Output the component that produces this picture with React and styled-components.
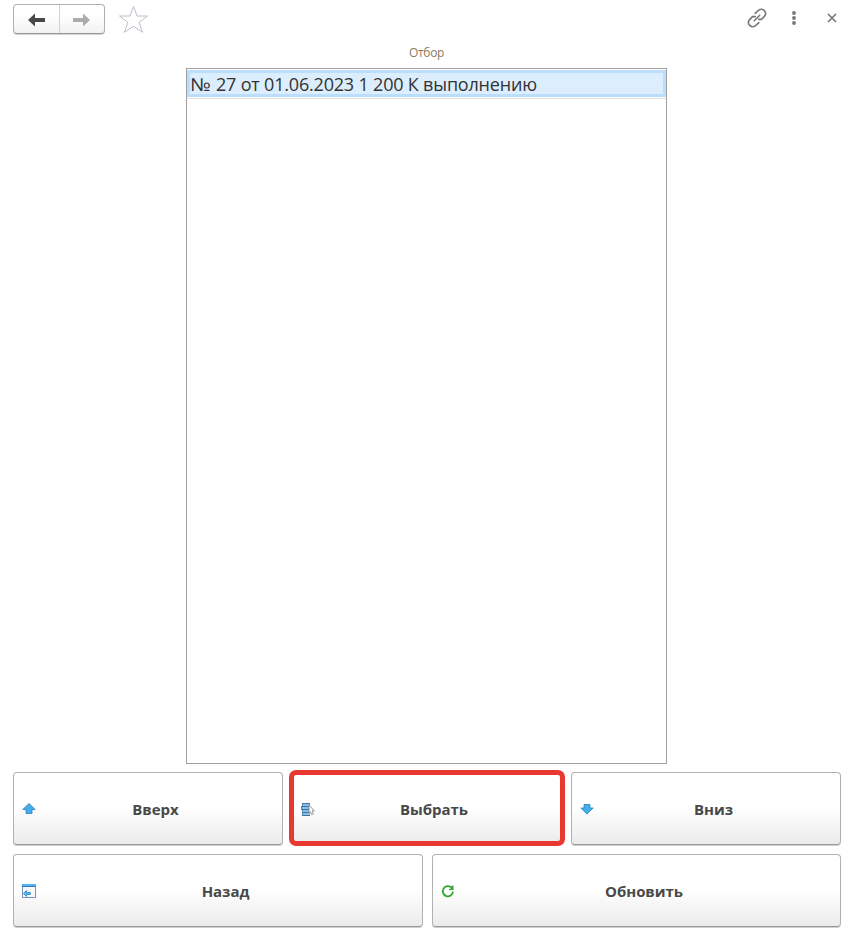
import React from "react";
import styled, { createGlobalStyle } from "styled-components";

const GlobalStyle = createGlobalStyle`
  *, *::before, *::after { box-sizing: border-box; }
  body { margin: 0; background: #fff; font-family: "Open Sans", "Noto Sans", sans-serif; }
  button { font: inherit; padding: 0; margin: 0; border: 0; background: none; }
  svg { display: block; flex: none; }
`;

const Window = styled.main`
  width: 857px;
  height: 937px;
  display: flex;
  flex-direction: column;
  overflow: hidden;
`;

const TopBar = styled.header`
  display: flex;
  align-items: flex-start;
  height: 42px;
  padding: 4px 6px 0 13px;
`;

const History = styled.div`
  display: flex;
  width: 92px;
  height: 30px;
  border: 1px solid #b0b0b0;
  border-bottom-color: #999;
  border-radius: 4px;
  background: linear-gradient(#fff 35%, #f2f2f2);
  box-shadow: 0 1px 0 #d4d4d4;
`;

const HistoryButton = styled.button`
  flex: 1;
  display: flex;
  align-items: center;
  justify-content: center;
  color: ${(p) => (p.$dim ? "#acacac" : "#484848")};
  padding: 1px 0 0 ${(p) => (p.$dim ? 0 : 2)}px;
  & + & { border-left: 1px solid #d2d2d2; padding-right: 2px; }
`;

const StarButton = styled.button`
  margin: 1px 0 0 13px;
`;

const WindowTools = styled.div`
  display: flex;
  margin-left: auto;
`;

const ToolButton = styled.button`
  display: flex;
  align-items: center;
  justify-content: center;
  width: ${(p) => p.$width}px;
  height: 28px;
  color: #777;
`;

const Caption = styled.div`
  height: 26px;
  padding-right: 4px;
  text-align: center;
  font-size: 12px;
  line-height: 22px;
  letter-spacing: -0.3px;
  color: #8d7a60;
`;

const OrderList = styled.section`
  width: 481px;
  height: 696px;
  margin-left: 186px;
  border: 1px solid #a0a0a0;
`;

const OrderRow = styled.div`
  height: 30px;
  border-bottom: 1px solid #e4e4e4;
  padding-top: 1px;
`;

const OrderCell = styled.div`
  height: 27px;
  border: 3px solid #badefb;
  background: #dceefd;
  color: #333;
  font-size: 18px;
  line-height: 23px;
  letter-spacing: -0.19px;
  white-space: nowrap;
`;

const NumberSign = styled.span`
  display: inline-block;
  line-height: 1;
  width: 21.5px;
  transform: scaleX(1.14);
  transform-origin: left;
`;

const Actions = styled.div`
  display: flex;
  flex-direction: column;
  gap: 8px;
  padding: 8px 16px 0 13px;
`;

const ActionRow = styled.div`
  display: grid;
  grid-template-columns: ${(p) => p.$columns};
  column-gap: ${(p) => p.$gap}px;
`;

const ActionButton = styled.button`
  position: relative;
  display: flex;
  align-items: center;
  height: 73px;
  margin-bottom: 1px;
  padding: 1px 7px 0 8px;
  border: 1px solid #b1b1b1;
  border-bottom-color: #999;
  border-radius: 4px;
  background: linear-gradient(#fff 48%, #ebebeb);
  box-shadow: 0 1px 0 #cfcfcf;
  color: #484848;
  font-size: 15px;
  font-weight: 700;
  ${(p) => p.$marked && `
    padding-left: 7px;
    &::after {
      content: "";
      position: absolute;
      inset: -3px -5px -2px -5px;
      border: 5px solid #e73930;
      border-radius: 7px;
    }
  `}
`;

const ActionLabel = styled.span`
  flex: 1;
  text-align: center;
  line-height: 20px;
  letter-spacing: -0.05px;
`;

const ArrowIcon = ({ back }) => (
  <svg width="18" height="14" viewBox="0 0 18 14">
    <path d={back ? "M0 7 7 .5V5H17V9H7V13.5Z" : "M18 7 11 .5V5H1V9H11V13.5Z"} fill="currentColor" />
  </svg>
);

const StarIcon = () => (
  <svg width="31" height="29" viewBox="0 0 31 29">
    <path d="M15.5 1.3 19 11H29.5L21.2 17.3 24.5 27.3 15.5 21.2 6.5 27.3 9.8 17.3 1.5 11H12Z" fill="none" stroke="#bac0c9" />
  </svg>
);

const LinkIcon = () => (
  <svg width="20" height="20" viewBox="0 0 20 20" fill="none" stroke="currentColor" strokeWidth="1.6" strokeLinecap="round">
    <path d="M8.2 5.4 11.4 2.4C15.7-.9 20.8 4.2 17.4 8.4L14.5 11.4H11.7M11.8 14.6 8.6 17.6C4.3 20.9-.8 15.8 2.6 11.6L5.5 8.6H8.3M7.3 12.7 12.7 7.3" />
  </svg>
);

const MoreIcon = () => (
  <svg width="6" height="16" viewBox="0 0 6 16" fill="currentColor">
    <circle cx="3" cy="3" r="1.9" />
    <circle cx="3" cy="8" r="1.9" />
    <circle cx="3" cy="13" r="1.9" />
  </svg>
);

const CloseIcon = () => (
  <svg width="10" height="10" viewBox="0 0 10 10">
    <path d="M1 1 9 9M9 1 1 9" stroke="currentColor" strokeWidth="1.7" />
  </svg>
);

const UpIcon = () => (
  <svg width="14" height="14" viewBox="0 0 14 14">
    <path d="M7 1.5 13.2 7.5H10V11.5H4V7.5H.8Z" fill="#42aeea" stroke="#2e7fb5" strokeWidth=".8" />
  </svg>
);

const DownIcon = () => (
  <svg width="14" height="14" viewBox="0 0 14 14">
    <path d="M7 12 13.2 6H10V2.5H4V6H.8Z" fill="#42aeea" stroke="#2e7fb5" strokeWidth=".8" />
  </svg>
);

const SelectIcon = () => (
  <svg width="14" height="14" viewBox="0 0 14 14">
    <path d="M1 1H9V4H1ZM0 4H9V8H0ZM1 8H9V14H1Z" fill="#86bfec" />
    <path d="M1 1.5H9M0 4.5H9M0 7.5H9M1 10.5H9M1 13.5H9" stroke="#3d6992" strokeWidth=".9" />
    <path d="M1.5 1V4M.5 4V8M1.5 8V14M8.5 1V4" stroke="#5381aa" strokeWidth=".8" />
    <path d="M8 3 13.3 8.8H11.2L12.4 11.8 10.7 12.6 9.5 9.8 8 11.2Z" fill="#fff" stroke="#8b8b8b" strokeWidth=".9" />
  </svg>
);

const BackIcon = () => (
  <svg width="14" height="14" viewBox="0 0 14 14">
    <path d="M.5 .5H13.5V13.5H.5Z" fill="#f8f8fb" stroke="#7793b5" />
    <path d="M0 0H14V2H0Z" fill="#55b4f5" />
    <path d="M0 2H14V3H0Z" fill="#2e78ba" />
    <path d="M1.4 9.5 4.6 6.6V8.6H8.3V10.4H4.6V12.4Z" fill="#55c8fb" stroke="#3285bd" strokeWidth=".9" />
  </svg>
);

const RefreshIcon = () => (
  <svg width="14" height="14" viewBox="0 0 14 14">
    <path d="M10.6 3.7A5.1 5.1 0 1 0 12 7.7" fill="none" stroke="#30a734" strokeWidth="1.8" />
    <path d="M12.5 1.4V6H7.9V4.9L10.2 4.3V2Z" fill="#30a734" />
  </svg>
);

const Action = ({ icon, children, marked }) => (
  <ActionButton $marked={marked}>
    {icon}
    <ActionLabel>{children}</ActionLabel>
  </ActionButton>
);

export default function App() {
  return (
    <Window>
      <GlobalStyle />
      <TopBar>
        <History>
          <HistoryButton aria-label="Назад"><ArrowIcon back /></HistoryButton>
          <HistoryButton $dim aria-label="Вперёд"><ArrowIcon /></HistoryButton>
        </History>
        <StarButton aria-label="Избранное"><StarIcon /></StarButton>
        <WindowTools>
          <ToolButton $width={38} aria-label="Ссылка"><LinkIcon /></ToolButton>
          <ToolButton $width={36} aria-label="Ещё"><MoreIcon /></ToolButton>
          <ToolButton $width={39} aria-label="Закрыть"><CloseIcon /></ToolButton>
        </WindowTools>
      </TopBar>
      <Caption>Отбор</Caption>
      <OrderList>
        <OrderRow>
          <OrderCell><NumberSign>№</NumberSign> 27 от 01.06.2023 1 200 К выполнению</OrderCell>
        </OrderRow>
      </OrderList>
      <Actions>
        <ActionRow $columns="270px 268px 270px" $gap={10}>
          <Action icon={<UpIcon />}>Вверх</Action>
          <Action icon={<SelectIcon />} marked>Выбрать</Action>
          <Action icon={<DownIcon />}>Вниз</Action>
        </ActionRow>
        <ActionRow $columns="410px 409px" $gap={9}>
          <Action icon={<BackIcon />}>Назад</Action>
          <Action icon={<RefreshIcon />}>Обновить</Action>
        </ActionRow>
      </Actions>
    </Window>
  );
}
